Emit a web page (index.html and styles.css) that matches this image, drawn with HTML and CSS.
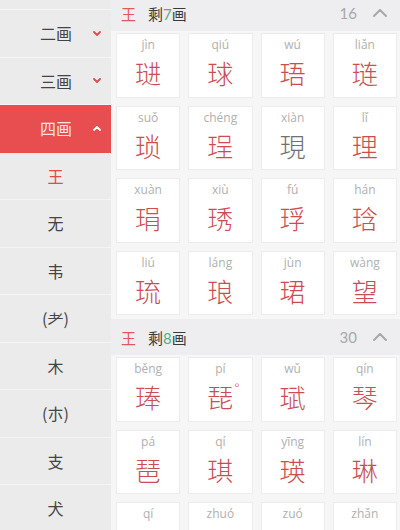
FILE: index.html
```html
<!DOCTYPE html>
<html lang="zh">
<head>
<meta charset="utf-8">
<link rel="stylesheet" href="styles.css">
</head>
<body>
<div class="app">
  <aside class="side">
    <div class="side-list">
      <div class="stroke partial"></div>
      <div class="stroke"><span class="label">二画</span><svg class="chev" viewBox="0 0 8 5"><polyline points="1,1 4,4 7,1"/></svg></div>
      <div class="stroke"><span class="label">三画</span><svg class="chev" viewBox="0 0 8 5"><polyline points="1,1 4,4 7,1"/></svg></div>
      <div class="stroke active"><span class="label">四画</span><svg class="chev" viewBox="0 0 8 5"><polyline points="1,4 4,1 7,4"/></svg></div>
      <div class="radical current">王</div>
      <div class="radical">无</div>
      <div class="radical">韦</div>
      <div class="radical">(耂)</div>
      <div class="radical">木</div>
      <div class="radical">(朩)</div>
      <div class="radical">支</div>
      <div class="radical">犬</div>
    </div>
  </aside>
  <main class="main">
    <section class="section">
      <div class="sec-head">
        <span class="rad">王</span>
        <span class="rem">剩<em>7</em>画</span>
        <span class="count">16</span>
        <svg class="up" viewBox="0 0 14 8"><polyline points="1,7 7,1 13,7"/></svg>
      </div>
      <div class="grid">
        <div class="card"><span class="py">jìn</span><span class="hz">琎</span></div>
        <div class="card"><span class="py">qiú</span><span class="hz">球</span></div>
        <div class="card"><span class="py">wú</span><span class="hz">珸</span></div>
        <div class="card"><span class="py">liǎn</span><span class="hz">琏</span></div>
        <div class="card"><span class="py">suǒ</span><span class="hz">琐</span></div>
        <div class="card"><span class="py">chéng</span><span class="hz">珵</span></div>
        <div class="card"><span class="py">xiàn</span><span class="hz trad">現</span></div>
        <div class="card"><span class="py">lǐ</span><span class="hz">理</span></div>
        <div class="card"><span class="py">xuàn</span><span class="hz">琄</span></div>
        <div class="card"><span class="py">xiù</span><span class="hz">琇</span></div>
        <div class="card"><span class="py">fú</span><span class="hz">琈</span></div>
        <div class="card"><span class="py">hán</span><span class="hz">琀</span></div>
        <div class="card"><span class="py">liú</span><span class="hz">琉</span></div>
        <div class="card"><span class="py">láng</span><span class="hz">琅</span></div>
        <div class="card"><span class="py">jùn</span><span class="hz">珺</span></div>
        <div class="card"><span class="py">wàng</span><span class="hz">望</span></div>
      </div>
    </section>
    <section class="section">
      <div class="sec-head">
        <span class="rad">王</span>
        <span class="rem">剩<em>8</em>画</span>
        <span class="count">30</span>
        <svg class="up" viewBox="0 0 14 8"><polyline points="1,7 7,1 13,7"/></svg>
      </div>
      <div class="grid">
        <div class="card"><span class="py">běng</span><span class="hz">琫</span></div>
        <div class="card"><span class="py">pí</span><span class="hz mark">琵<span class="deg">°</span></span></div>
        <div class="card"><span class="py">wǔ</span><span class="hz">珷</span></div>
        <div class="card"><span class="py">qín</span><span class="hz">琴</span></div>
        <div class="card"><span class="py">pá</span><span class="hz">琶</span></div>
        <div class="card"><span class="py">qí</span><span class="hz">琪</span></div>
        <div class="card"><span class="py">yīng</span><span class="hz">瑛</span></div>
        <div class="card"><span class="py">lín</span><span class="hz">琳</span></div>
        <div class="card"><span class="py">qí</span></div>
        <div class="card"><span class="py">zhuó</span></div>
        <div class="card"><span class="py">zuó</span></div>
        <div class="card"><span class="py">zhǎn</span></div>
      </div>
    </section>
  </main>
</div>
</body>
</html>
```

FILE: styles.css
```css
html, body {
  margin: 0;
  padding: 0;
  width: 400px;
  height: 530px;
  overflow: hidden;
  background: #f5f5f6;
  font-family: "Noto Sans CJK SC", "Noto Sans", sans-serif;
}

.app {
  display: flex;
  width: 400px;
  height: 530px;
  overflow: hidden;
}

.side {
  width: 111px;
  flex: none;
  background: #ebebeb;
  overflow: hidden;
}

.side-list {
  display: flex;
  flex-direction: column;
}

.stroke,
.radical {
  height: 47.5px;
  flex: none;
  box-sizing: border-box;
  border-bottom: 1px solid #f5f5f5;
  display: flex;
  align-items: center;
  font-size: 16px;
  color: #444;
}

.stroke.partial {
  height: 10px;
}

.stroke {
  justify-content: flex-end;
  padding-right: 10px;
  gap: 21px;
}

.chev {
  width: 8px;
  height: 5px;
  fill: none;
  stroke: #e24b4d;
  stroke-width: 1.8;
  stroke-linecap: round;
  stroke-linejoin: round;
}

.stroke.active {
  background: #e84d4f;
  color: #fde3e3;
  border-bottom-color: #e84d4f;
}

.stroke.active .chev {
  stroke: #fff;
}

.radical {
  justify-content: center;
}

.radical.current {
  color: #e04a4c;
}

.main {
  flex: 1;
  overflow: hidden;
  display: flex;
  flex-direction: column;
  margin-top: -5px;
  background: #f6f6f7;
}

.sec-head {
  height: 36px;
  flex: none;
  background: #eeeef1;
  display: flex;
  align-items: center;
  padding: 0 13px 0 10px;
  font-size: 15px;
}

.rad {
  color: #e0585a;
}

.rem {
  margin-left: 12px;
  color: #3a3a3a;
}

.rem em {
  font-style: normal;
  color: #4fae84;
  font-family: "Lato", "Open Sans", sans-serif;
}

.count {
  margin-left: auto;
  color: #a8a8a8;
  font-family: "Lato", "Open Sans", sans-serif;
  font-size: 15px;
}

.up {
  width: 14px;
  height: 8px;
  margin-left: 16px;
  fill: none;
  stroke: #a8a8a8;
  stroke-width: 2;
  stroke-linecap: round;
  stroke-linejoin: round;
}

.grid {
  display: grid;
  grid-template-columns: repeat(4, 1fr);
  gap: 8px;
  padding: 2px 3px 4px 5px;
}

.card {
  height: 64.5px;
  box-sizing: border-box;
  background: #fff;
  border: 1px solid #ececec;
  display: flex;
  flex-direction: column;
  align-items: center;
  padding-top: 4px;
}

.py {
  font-family: "Open Sans", "Lato", sans-serif;
  font-size: 12px;
  line-height: 14px;
  color: #b0b0b0;
}

.hz {
  margin-top: 6px;
  font-size: 26px;
  line-height: 30px;
  font-weight: 300;
  color: #cc4c53;
}

.hz.trad {
  color: #707070;
}

.hz.mark {
  position: relative;
}

.deg {
  position: absolute;
  left: 100%;
  top: -4px;
  margin-left: 1px;
  font-size: 14px;
  line-height: 20px;
}
```
